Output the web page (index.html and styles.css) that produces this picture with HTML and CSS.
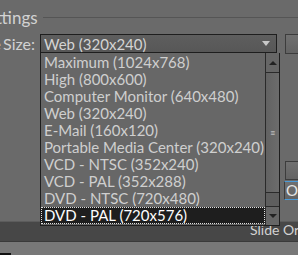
FILE: index.html
```html
<html>
<head>
  <title>Slide Settings</title>
  <link rel="stylesheet" href="styles.css">
</head>
<body>
  <div class="panel">
    <div class="group-title">
      <span class="group-name">Settings</span>
      <span class="group-line"></span>
    </div>

    <div class="field">
      <label class="field-label"><span class="label-text">Slide Size:</span></label>
      <div class="select">
        <span class="select-value">Web (320x240)</span>
        <span class="select-arrow"></span>
      </div>
      <div class="side-btn"></div>
    </div>

    <div class="middle">
      <div class="side-btn tall"></div>
      <div class="side-btn ok">OK</div>
    </div>

    <div class="band">
      <span class="band-text">Slide Order</span>
    </div>
    <div class="footer">
      <span class="footer-mark"></span>
    </div>

    <div class="dropdown">
      <ul class="options">
        <li>Maximum (1024x768)</li>
        <li>High (800x600)</li>
        <li>Computer Monitor (640x480)</li>
        <li>Web (320x240)</li>
        <li>E-Mail (160x120)</li>
        <li>Portable Media Center (320x240)</li>
        <li>VCD - NTSC (352x240)</li>
        <li>VCD - PAL (352x288)</li>
        <li>DVD - NTSC (720x480)</li>
        <li class="selected">DVD - PAL (720x576)</li>
      </ul>
      <div class="scrollbar">
        <div class="scroll-btn up"><span class="tri-up"></span></div>
        <div class="scroll-thumb"><span class="grip">&#8801;</span></div>
        <div class="scroll-track"></div>
        <div class="scroll-btn down"><span class="tri-down"></span></div>
      </div>
    </div>
  </div>
</body>
</html>
```

FILE: styles.css
```css
body {
  margin: 0;
  padding: 0;
  background-color: #6a6a6a;
  font-family: Lato, "Open Sans", sans-serif;
  overflow: hidden;
}

.panel {
  position: relative;
  width: 298px;
  height: 255px;
  overflow: hidden;
}

.group-title {
  display: flex;
  align-items: center;
  height: 20px;
  padding-top: 7px;
  margin-left: -22px;
}

.group-name {
  color: #d2d2d2;
  font-size: 17px;
}

.group-line {
  flex: 1;
  height: 1px;
  margin-left: 5px;
  margin-top: 1px;
  background-color: #555;
}

.field {
  display: flex;
  align-items: center;
  margin-top: 7px;
  height: 19px;
}

.field-label {
  display: block;
  direction: rtl;
  color: #d2d2d2;
  font-size: 16px;
  width: 35px;
  flex-shrink: 0;
  padding-right: 5px;
  white-space: nowrap;
  word-spacing: -2px;
}

.label-text {
  direction: ltr;
  unicode-bidi: isolate;
}

.select {
  display: flex;
  align-items: center;
  justify-content: space-between;
  width: 226px;
  height: 17px;
  border: 1px solid #1e1e1e;
  background: linear-gradient(#5e5e5e, #575757);
  padding: 0 6px 0 3px;
  box-sizing: content-box;
  flex-shrink: 0;
}

.select-value {
  color: #d4d4d4;
  font-size: 15px;
}

.select-arrow {
  border-left: 4px solid transparent;
  border-right: 4px solid transparent;
  border-top: 5px solid #c8c8c8;
}

.side-btn {
  margin-left: auto;
  width: 12px;
  height: 18px;
  border: 1px solid #3c3c3c;
  border-right: none;
  background: linear-gradient(#707070, #636363);
}

.middle {
  display: flex;
  flex-direction: column;
  align-items: flex-end;
  margin-top: 108px;
}

.middle .tall {
  height: 17px;
}

.middle .ok {
  height: 17px;
  margin-top: 1px;
  border-top: 1px solid #4a9ad8;
  border-bottom: 1px solid #4a9ad8;
  color: #e4e4e4;
  font-size: 15px;
  line-height: 17px;
  padding-left: 1px;
  box-sizing: content-box;
  overflow: hidden;
}

.band {
  margin-top: 21px;
  height: 19px;
  background-color: #474747;
  border-top: 1px solid #5c5c5c;
  border-bottom: 1px solid #3a3a3a;
  display: flex;
  justify-content: flex-start;
}

.band-text {
  color: #d2d2d2;
  font-size: 14px;
  line-height: 16px;
  margin-left: 250px;
  white-space: nowrap;
}

.footer {
  height: 20px;
  background-color: #787878;
  position: relative;
}

.footer-mark {
  position: absolute;
  left: 0;
  top: 11px;
  width: 11px;
  height: 4px;
  background-color: #111;
}

/* popup list lies over the dialog */
.dropdown {
  position: absolute;
  left: 40px;
  top: 53px;
  width: 238px;
  height: 172px;
  border: 1px solid #1e1e1e;
  border-top: none;
  background-color: #676767;
  display: flex;
}

.options {
  list-style: none;
  margin: 0;
  padding: 1px 0 0 0;
  flex: 1;
}

.options li {
  height: 17px;
  line-height: 17px;
  padding-left: 3px;
  color: #cfcfcf;
  font-size: 15px;
  white-space: nowrap;
  overflow: hidden;
}

.options li.selected {
  background-color: #1e1e1e;
  color: #fff;
  outline: 1px dotted #e0e0e0;
  outline-offset: -1px;
}

.scrollbar {
  width: 13px;
  display: flex;
  flex-direction: column;
  border-left: 1px solid #2a2a2a;
}

.scroll-btn {
  display: flex;
  align-items: center;
  justify-content: center;
  background: #666;
}

.scroll-btn.up {
  height: 19px;
  border-bottom: 1px solid #2a2a2a;
}

.scroll-btn.down {
  height: 17px;
}

.tri-up {
  border-left: 4px solid transparent;
  border-right: 4px solid transparent;
  border-bottom: 4px solid #222;
}

.tri-down {
  border-left: 4px solid transparent;
  border-right: 4px solid transparent;
  border-top: 4px solid #222;
}

.scroll-thumb {
  height: 119px;
  background: linear-gradient(90deg, #626262, #6c6c6c);
  border-bottom: 1px solid #2a2a2a;
  display: flex;
  align-items: center;
  justify-content: center;
}

.grip {
  color: #ddd;
  font-size: 9px;
}

.scroll-track {
  height: 13px;
  background-color: #5e5e5e;
  border-bottom: 1px solid #2a2a2a;
}
```
